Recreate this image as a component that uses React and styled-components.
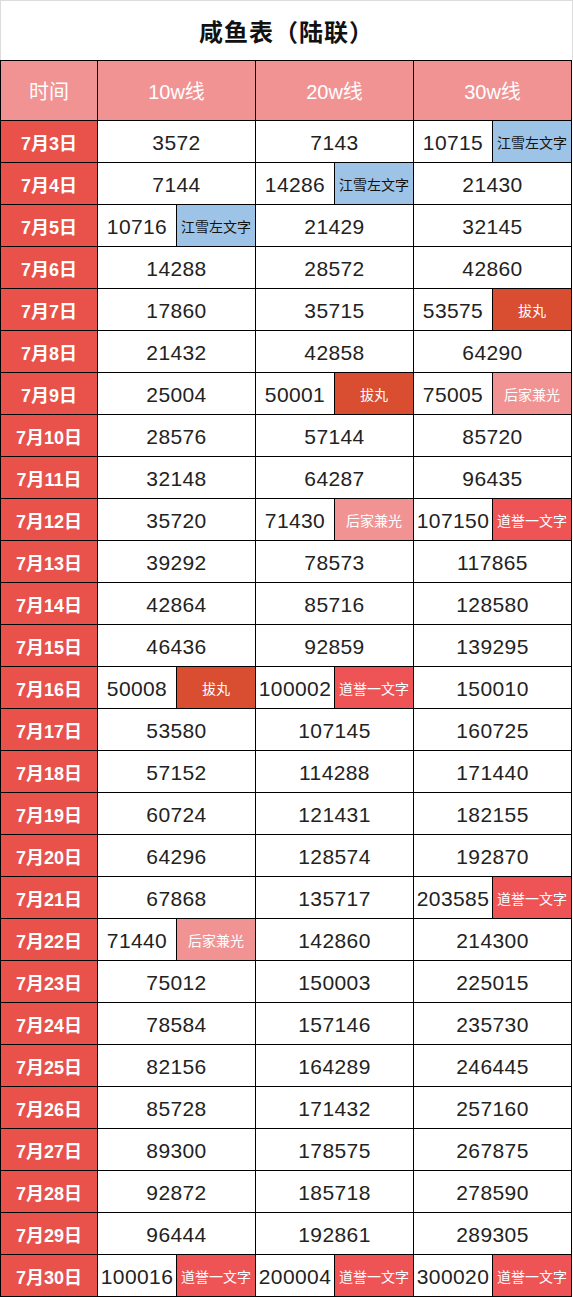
import React from 'react';
import styled, { createGlobalStyle } from 'styled-components';

const GlobalStyle = createGlobalStyle`
  html, body {
    margin: 0;
    padding: 0;
    background: #ffffff;
  }
  body {
    font-family: 'Liberation Sans', 'Noto Sans CJK SC', sans-serif;
    color: #1f1f1f;
  }
`;

const COLORS = {
  date: '#E8524A',
  header: '#F19393',
  blue: '#9DC3E6',
  bawan: '#D94D31',
  houjia: '#F19393',
  daoyu: '#EE5455',
};

const TAGS = {
  jx: { label: '江雪左文字', bg: COLORS.blue, fg: '#111111' },
  bw: { label: '拔丸', bg: COLORS.bawan, fg: '#ffffff' },
  hj: { label: '后家兼光', bg: COLORS.houjia, fg: '#ffffff' },
  dy: { label: '道誉一文字', bg: COLORS.daoyu, fg: '#ffffff' },
};

const rows = [
  ['7月3日', [3572], [7143], [10715, 'jx']],
  ['7月4日', [7144], [14286, 'jx'], [21430]],
  ['7月5日', [10716, 'jx'], [21429], [32145]],
  ['7月6日', [14288], [28572], [42860]],
  ['7月7日', [17860], [35715], [53575, 'bw']],
  ['7月8日', [21432], [42858], [64290]],
  ['7月9日', [25004], [50001, 'bw'], [75005, 'hj']],
  ['7月10日', [28576], [57144], [85720]],
  ['7月11日', [32148], [64287], [96435]],
  ['7月12日', [35720], [71430, 'hj'], [107150, 'dy']],
  ['7月13日', [39292], [78573], [117865]],
  ['7月14日', [42864], [85716], [128580]],
  ['7月15日', [46436], [92859], [139295]],
  ['7月16日', [50008, 'bw'], [100002, 'dy'], [150010]],
  ['7月17日', [53580], [107145], [160725]],
  ['7月18日', [57152], [114288], [171440]],
  ['7月19日', [60724], [121431], [182155]],
  ['7月20日', [64296], [128574], [192870]],
  ['7月21日', [67868], [135717], [203585, 'dy']],
  ['7月22日', [71440, 'hj'], [142860], [214300]],
  ['7月23日', [75012], [150003], [225015]],
  ['7月24日', [78584], [157146], [235730]],
  ['7月25日', [82156], [164289], [246445]],
  ['7月26日', [85728], [171432], [257160]],
  ['7月27日', [89300], [178575], [267875]],
  ['7月28日', [92872], [185718], [278590]],
  ['7月29日', [96444], [192861], [289305]],
  ['7月30日', [100016, 'dy'], [200004, 'dy'], [300020, 'dy']],
];

const Page = styled.div`
  width: 573px;
  min-height: 1298px;
  box-sizing: border-box;
`;

const TitleBar = styled.div`
  height: 60px;
  box-sizing: border-box;
  border: 1px solid #dcdcdc;
  border-bottom: none;
  display: flex;
  align-items: center;
  justify-content: center;
  font-size: 24px;
  font-weight: 700;
  color: #111111;
  letter-spacing: 1px;
`;

const Table = styled.div`
  width: 572px;
  display: grid;
  grid-template-columns: 96px repeat(3, 157px);
  gap: 1px;
  background: #000000;
  border: 1px solid #000000;
  box-sizing: border-box;
`;

const HeadCell = styled.div`
  height: 59px;
  background: ${COLORS.header};
  color: #ffffff;
  font-size: 20px;
  display: flex;
  align-items: center;
  justify-content: center;
`;

const DateCell = styled.div`
  height: 41px;
  background: ${COLORS.date};
  color: #ffffff;
  font-size: 18px;
  font-weight: 700;
  display: flex;
  align-items: center;
  justify-content: center;
`;

const ValueCell = styled.div`
  height: 41px;
  background: #ffffff;
  display: flex;
`;

const Num = styled.div`
  flex: ${(p) => (p.$split ? '0 0 79px' : '1')};
  display: flex;
  align-items: center;
  justify-content: center;
  padding-top: 2px;
  box-sizing: border-box;
  font-size: 21px;
  letter-spacing: 0.4px;
  color: #222222;
  border-right: ${(p) => (p.$split ? '1px solid #000000' : 'none')};
`;

const Tag = styled.div`
  flex: 1;
  display: flex;
  align-items: center;
  justify-content: center;
  background: ${(p) => p.$bg};
  color: ${(p) => p.$fg};
  font-size: 14px;
`;

const Value = ({ value, tag }) => {
  const t = tag ? TAGS[tag] : null;
  return (
    <ValueCell>
      <Num $split={!!t}>{value}</Num>
      {t && (
        <Tag $bg={t.bg} $fg={t.fg}>
          {t.label}
        </Tag>
      )}
    </ValueCell>
  );
};

export default function App() {
  return (
    <Page>
      <GlobalStyle />
      <TitleBar>咸鱼表（陆联）</TitleBar>
      <Table>
        <HeadCell>时间</HeadCell>
        <HeadCell>10w线</HeadCell>
        <HeadCell>20w线</HeadCell>
        <HeadCell>30w线</HeadCell>
        {rows.map(([date, a, b, c]) => (
          <React.Fragment key={date}>
            <DateCell>{date}</DateCell>
            <Value value={a[0]} tag={a[1]} />
            <Value value={b[0]} tag={b[1]} />
            <Value value={c[0]} tag={c[1]} />
          </React.Fragment>
        ))}
      </Table>
    </Page>
  );
}
